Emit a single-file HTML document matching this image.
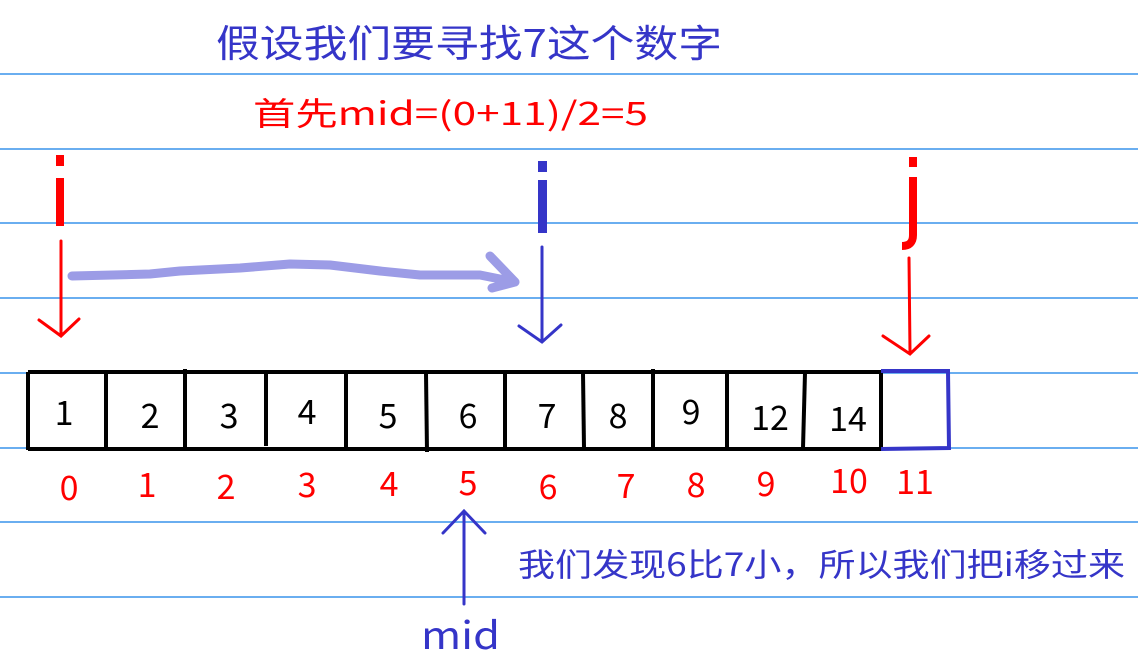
<!DOCTYPE html>
<html><head><meta charset="utf-8"><style>
html,body{margin:0;padding:0;background:#fff;}
svg{display:block;}
text{font-family:"Noto Sans CJK SC","DejaVu Sans",sans-serif;}
</style></head><body>
<svg width="1138" height="671" viewBox="0 0 1138 671" xmlns="http://www.w3.org/2000/svg">
<g stroke="#6aaef0" stroke-width="2">
<line x1="0" y1="74" x2="1138" y2="74"/>
<line x1="0" y1="149" x2="1138" y2="149"/>
<line x1="0" y1="223" x2="1138" y2="223"/>
<line x1="0" y1="298" x2="1138" y2="298"/>
<line x1="0" y1="373" x2="1138" y2="373"/>
<line x1="0" y1="448" x2="1138" y2="448"/>
<line x1="0" y1="522" x2="1138" y2="522"/>
<line x1="0" y1="597" x2="1138" y2="597"/>
</g>
<text x="216" y="57" font-size="38" fill="#3535c8" textLength="506" lengthAdjust="spacingAndGlyphs">假设我们要寻找7这个数字</text>
<text x="253" y="125" font-size="32" fill="#ff0000" textLength="395" lengthAdjust="spacingAndGlyphs">首先mid=(0+11)/2=5</text>
<rect x="56" y="155" width="8" height="11" fill="#ff0000"/>
<rect x="56" y="178" width="8" height="48" fill="#ff0000"/>
<path d="M61 241 L61 335 M39 320 L61 336 L79 319" stroke="#ff0000" stroke-width="3" fill="none" stroke-linecap="round"/>
<rect x="538" y="161" width="9" height="11" fill="#3535c8"/>
<rect x="538" y="180" width="9" height="53" fill="#3535c8"/>
<path d="M542 247 L542 341 M519 326 L542 342 L561 325" stroke="#3535c8" stroke-width="3" fill="none" stroke-linecap="round"/>
<path d="M72 276 L150 274 L180 271 L240 268 L290 264 L330 265 L380 271 L420 275 L480 275 L515 282 M490 256 L515 282 L492 288" stroke="#9c9ce6" stroke-width="9" fill="none" stroke-linecap="round" stroke-linejoin="round"/>
<rect x="909" y="157" width="8" height="10" fill="#ff0000"/>
<path d="M913 177 L913 235 Q913 246 902 246" stroke="#ff0000" stroke-width="8" fill="none"/>
<path d="M909 258 L910 352 M883 336 L910 354 L929 336" stroke="#ff0000" stroke-width="3" fill="none" stroke-linecap="round"/>
<g stroke="#000" stroke-width="4" fill="none">
<line x1="28" y1="372" x2="882" y2="372"/>
<line x1="28" y1="449" x2="882" y2="449"/>
<line x1="28" y1="372" x2="28" y2="450"/>
<line x1="106" y1="372" x2="106" y2="448"/>
<line x1="185" y1="369" x2="185" y2="451"/>
<line x1="266" y1="373" x2="266" y2="446"/>
<line x1="346" y1="373" x2="346" y2="451"/>
<line x1="426" y1="373" x2="427" y2="452"/>
<line x1="505" y1="373" x2="505" y2="448"/>
<line x1="583" y1="373" x2="584" y2="448"/>
<line x1="653" y1="369" x2="653" y2="448"/>
<line x1="727" y1="370" x2="727" y2="450"/>
<line x1="805" y1="373" x2="803" y2="448"/>
<line x1="881" y1="373" x2="881" y2="448"/>
</g>
<path d="M881 371 L948 371 L949 448 L881 449" stroke="#3535c8" stroke-width="4" fill="none"/>
<g font-size="34" fill="#000" text-anchor="middle">
<text x="64" y="425">1</text>
<text x="150" y="428">2</text>
<text x="229" y="428">3</text>
<text x="307" y="424">4</text>
<text x="388" y="428">5</text>
<text x="468" y="428">6</text>
<text x="547" y="428">7</text>
<text x="618" y="428">8</text>
<text x="691" y="424">9</text>
<text x="770" y="430">12</text>
<text x="848" y="431">14</text>
</g>
<g font-size="34" fill="#ff0000" text-anchor="middle">
<text x="69" y="500">0</text>
<text x="147" y="497">1</text>
<text x="226" y="499">2</text>
<text x="307" y="497">3</text>
<text x="389" y="496">4</text>
<text x="468" y="495">5</text>
<text x="548" y="499">6</text>
<text x="626" y="498">7</text>
<text x="696" y="497">8</text>
<text x="766" y="496">9</text>
<text x="849" y="493">10</text>
<text x="915" y="494">11</text>
</g>
<path d="M464 604 L464 512 M443 533 L464 511 L485 533" stroke="#3535c8" stroke-width="3" fill="none" stroke-linecap="round"/>
<text x="421" y="649" font-size="38" fill="#3535c8" textLength="79" lengthAdjust="spacingAndGlyphs">mid</text>
<text x="518" y="576" font-size="32" fill="#3535c8" textLength="607" lengthAdjust="spacingAndGlyphs">我们发现6比7小，所以我们把i移过来</text>
</svg>
</body></html>
